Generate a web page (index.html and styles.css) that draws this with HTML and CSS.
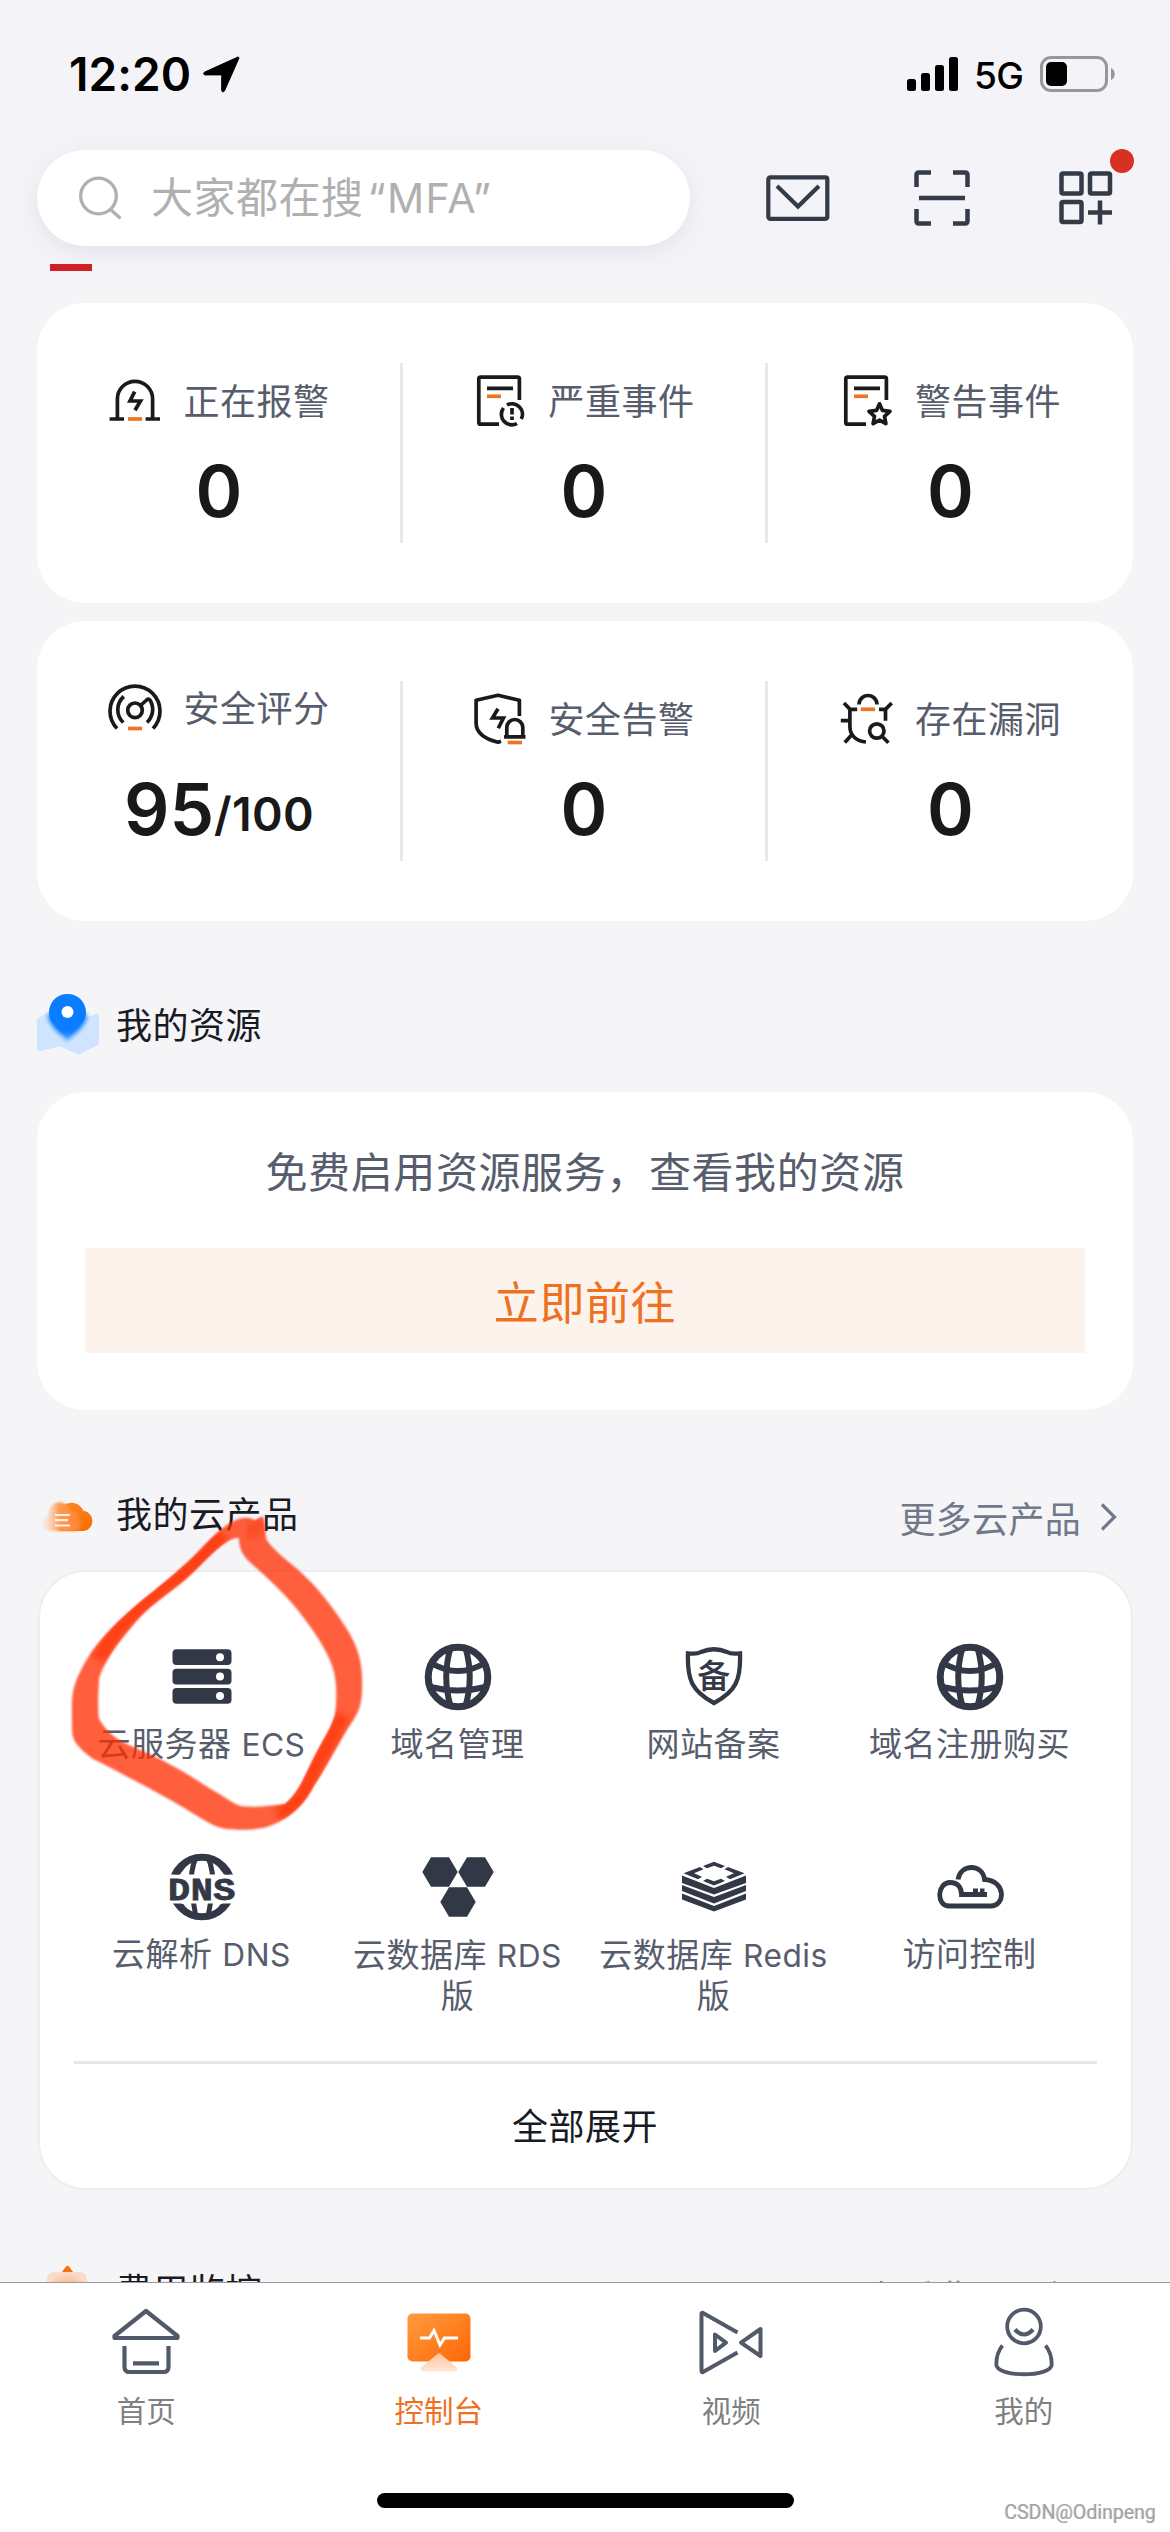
FILE: index.html
```html
<!DOCTYPE html>
<html lang="zh-CN">
<head>
<meta charset="utf-8">
<title>控制台</title>
<link rel="stylesheet" href="styles.css">
</head>
<body>
<div class="app">
  <div class="status">
    <div class="status-left">
      <span class="clock">12:20</span>
      <svg class="loc" width="37" height="37" viewBox="0 0 37 37"><path d="M34.5 1.2c1-.4 1.7.3 1.3 1.3L21.5 34.800c-.8 1.700-2.800 1.400-2.800-.500V20.300c0-1-.4-1.400-1.400-1.400H2.200c-1.900 0-2.200-2-.5-2.800z" stroke="#000"/></svg>
    </div>
    <div class="status-right">
      <svg width="52" height="35" viewBox="0 0 52 35"><rect y="22" width="9" height="12" rx="2.500"/><rect x="14" y="16" width="9" height="18" rx="2.500"/><rect x="28" y="8" width="9" height="26" rx="2.500"/><rect x="42" width="9" height="34" rx="2.500"/></svg>
      <span class="net">5G</span>
      <svg width="76" height="36" viewBox="0 0 76 36"><rect x="1.500" y="1.500" width="65" height="33" rx="9.500" fill="none" stroke="#97979a" stroke-width="3"/><rect x="6" y="6" width="21" height="24" rx="5"/><path d="M71 12c5 2 5 10 0 12z" fill="#97979a"/></svg>
    </div>
  </div>

  <header class="header">
    <div class="search">
      <svg width="44" height="44" viewBox="0 0 44 44" fill="none" stroke="#b0b0b0" stroke-width="3.300" stroke-linecap="round"><circle cx="19.500" cy="20" r="17.800"/><path d="M31.500 33.500l9 8"/></svg>
      <span class="hint">大家都在搜<span class="lat">“MFA”</span></span>
    </div>
    <div class="actions">
      <svg width="64" height="47" viewBox="0 0 64 47" fill="none" stroke="#333a48" stroke-width="4.200"><rect x="2.300" y="2.300" width="59" height="41.500" rx="2"/><path d="M11 11l21 20.500L53 11"/></svg>
      <svg width="56" height="56" viewBox="0 0 56 56" fill="none" stroke="#333a48" stroke-width="4.500"><path d="M2.500 17V5q0-2.500 2.500-2.500h12M39 2.500h12q2.500 0 2.500 2.500v12M2.500 39v12q0 2.500 2.500 2.500h12M39 53.500h12q2.500 0 2.500-2.500V39M5 28h46"/></svg>
      <div class="apps">
        <svg width="54" height="54" viewBox="0 0 54 54" fill="none" stroke="#333a48" stroke-width="4.500"><rect x="2.500" y="2.500" width="20" height="20" rx="1.500"/><rect x="31" y="2.500" width="20" height="20" rx="1.500"/><rect x="2.500" y="31" width="20" height="20" rx="1.500"/><path d="M29 41.500h24M41 29.500v24"/></svg>
        <i class="dot"></i>
      </div>
    </div>
  </header>

  <main class="content">
    <i class="mark"></i>

    <section class="card stats">
      <div class="stat">
        <div class="label"><svg width="54" height="54" viewBox="0 0 54 54" class="ln"><path d="M9.400 45V25a17.600 17.600 0 0 1 35.200 0v20M26.700 17.700L22 27h10.500l-5.500 9.300M1.600 45H16M37.600 45H52"/><path class="or" d="M20 45h14"/></svg><span>正在报警</span></div>
        <div class="num">0</div>
      </div>
      <div class="stat">
        <div class="label"><svg width="54" height="54" viewBox="0 0 54 54" class="ln"><path d="M46.400 26V5q0-1.800-1.800-1.800H7.600q-1.800 0-1.800 1.800v43.400q0 1.800 1.800 1.800H26M14 14.300h26"/><path class="or" d="M14 22.300h14"/><path d="M34 31a10.500 10.500 0 0 1 14.300 14M44 49.500a10.500 10.500 0 0 1-13.500-15.500M39 34v6.500M39 42.500v3.500"/></svg><span>严重事件</span></div>
        <div class="num">0</div>
      </div>
      <div class="stat">
        <div class="label"><svg width="54" height="54" viewBox="0 0 54 54" class="ln"><path d="M46.400 26V5q0-1.800-1.800-1.800H7.600q-1.800 0-1.800 1.800v43.400q0 1.800 1.800 1.800H26M14 14.300h26"/><path class="or" d="M14 22.300h14"/><path stroke-linejoin="round" d="M39.500 29.800l3 6.600 7.500.9-5.500 5.100 1.400 7.300-6.400-3.600-6.400 3.600 1.400-7.300-5.500-5.100 7.500-.9z"/></svg><span>警告事件</span></div>
        <div class="num">0</div>
      </div>
    </section>

    <section class="card stats">
      <div class="stat">
        <div class="label raised"><svg width="54" height="54" viewBox="0 0 54 54" class="ln"><path d="M9 47.500a25 25 0 1 1 36 0M15.800 15.500a17.500 17.500 0 0 0-.5 26M39 41.500a18 18 0 0 0 3-22.500q-1.500-2-4 .5l-5.500 5"/><circle cx="27" cy="29.300" r="7.300"/><path class="or" d="M20 47.500h14"/></svg><span>安全评分</span></div>
        <div class="num">95<small>/100</small></div>
      </div>
      <div class="stat">
        <div class="label"><svg width="54" height="54" viewBox="0 0 54 54" class="ln"><path stroke-linejoin="round" d="M46.400 24V8.300L25 3.300 3.100 8.300V31c0 10 9 16 21.900 19.300l3-1"/><path d="M25 16.700L19.500 26H30.400l-5.100 10.300M33.800 44V35.500a8 8 0 0 1 16 0V44M31 44.900h21.500"/><path class="or" d="M34.700 50.500H49"/></svg><span>安全告警</span></div>
        <div class="num">0</div>
      </div>
      <div class="stat">
        <div class="label"><svg width="54" height="54" viewBox="0 0 54 54" class="ln"><path d="M19 12.500a9 9 0 0 1 18 0M4 11l6 6.300h7.200M9.900 17.300v17.400c0 9 7 14.700 16 15.300M.8 28.700h9M4.800 50.500l7.200-8M39 17.300h6.500l6.200-6.300M45.500 17.300v11.500M43 45.300l5.400 5.400"/><circle cx="36.800" cy="39" r="7.200"/><path class="or" d="M20.800 17.300H35"/></svg><span>存在漏洞</span></div>
        <div class="num">0</div>
      </div>
    </section>

    <div class="title title-res">
      <svg width="62" height="62" viewBox="0 0 62 62">
        <defs><linearGradient id="pin" x1="0" y1="0" x2="0" y2="1"><stop offset=".6" stop-color="#0a7cff"/><stop offset="1" stop-color="#0a7cff" stop-opacity=".1"/></linearGradient><filter id="soft"><feGaussianBlur stdDeviation="2"/></filter></defs>
        <path d="M0 27q0-3 3-4l14-8 26 11 16-6q3-1 3 2v26q0 3-3 4l-15 8q-2 1-4 0l-16-7q-2-1-4 0l-16 4q-4 1-4-3z" fill="#cfe5ff"/>
        <path d="M11 20c0 12 12 18 19.500 29C38 38 50 32 50 20z" fill="url(#pin)" filter="url(#soft)"/>
        <path d="M30.500 0A18.300 18.300 0 0 0 12 18.500C12 29 22 34 30.500 46 39 34 49 29 49 18.500A18.300 18.300 0 0 0 30.500 0z" fill="url(#pin)"/>
        <circle cx="30.500" cy="18" r="6" fill="#fff"/>
      </svg>
      <h2>我的资源</h2>
    </div>

    <section class="card resource">
      <p>免费启用资源服务，查看我的资源</p>
      <button class="go">立即前往</button>
    </section>

    <div class="title title-cloud">
      <svg width="62" height="40" viewBox="0 0 62 40">
        <defs><linearGradient id="cl" x1="0" y1="0" x2="1" y2="1"><stop offset="0" stop-color="#ff8d2a"/><stop offset="1" stop-color="#f86a00"/></linearGradient><linearGradient id="cf" x1="0" y1="0" x2="1" y2="0"><stop offset="0" stop-color="#fbd9c4" stop-opacity=".2"/><stop offset=".45" stop-color="#ff9a55"/><stop offset="1" stop-color="#ff8430"/></linearGradient><filter id="sf2"><feGaussianBlur stdDeviation=".8"/></filter></defs>
        <path d="M22 37V18A13 13 0 0 1 46.500 16.800 10 10.200 0 0 1 47 37z" fill="url(#cl)"/>
        <path d="M13 37C2 37 2 23 11.500 22 11 7 28 3 33.500 17c8 1 12 12 9 17q-1.500 3-5 3z" fill="url(#cf)" filter="url(#sf2)"/>
        <path d="M18 21h15M18 26.200h13M18 31.500h15" stroke="#fff" stroke-opacity=".85" stroke-width="2.200"/>
      </svg>
      <h2>我的云产品</h2>
      <a class="more">更多云产品<svg width="17" height="28" viewBox="0 0 17 28" fill="none" stroke="#717889" stroke-width="3.200"><path d="M2 1.500l12.500 12.500L2 26.500"/></svg></a>
    </div>

    <section class="products">
      <div class="grid">
        <div class="item"><div class="ic"><svg width="60" height="56" viewBox="0 0 60 56" fill="#333847"><rect x=".5" y=".3" width="59" height="15.800" rx="4"/><rect x=".5" y="19.700" width="59" height="15.800" rx="4"/><rect x=".5" y="39" width="59" height="15.800" rx="4"/><g fill="#fff"><circle cx="48" cy="8.200" r="4"/><circle cx="48" cy="27.600" r="4"/><circle cx="48" cy="46.900" r="4"/></g></svg></div><span>云服务器 <span class="lat">ECS</span></span></div>
        <div class="item"><div class="ic"><svg width="68" height="68" viewBox="0 0 68 68" class="globe"><use href="#globe-lines"/></svg></div><span>域名管理</span></div>
        <div class="item"><div class="ic"><svg width="58" height="60" viewBox="0 0 58 60"><path d="M3 6.300q9 1 13-1.300 13-5.500 26 0 4 2.300 13 1.300C56 33 51 44 29 56 7 44 2 33 3 6.300z" fill="none" stroke="#333847" stroke-width="4.300"/><text x="29" y="41" class="bei">备</text></svg></div><span>网站备案</span></div>
        <div class="item"><div class="ic"><svg width="68" height="68" viewBox="0 0 68 68" class="globe"><g id="globe-lines"><circle cx="34" cy="34" r="29.800" stroke-width="7"/><path d="M26.500 5q-8.500 29 0 58M41.500 5q8.500 29 0 58M8 20.500q26 15 52 0M6.500 44q27.500 7 55 0" stroke-width="6"/></g></svg></div><span>域名注册购买</span></div>
        <div class="item"><div class="ic"><svg width="70" height="68" viewBox="0 0 70 68" class="globe"><defs><clipPath id="caps"><path d="M0 0h70v21.500H0zM0 50.500h70V68H0z"/></clipPath></defs><g clip-path="url(#caps)"><circle cx="35" cy="34" r="29.800" stroke-width="7"/><path d="M29 4q-6 15-4.500 30t4.500 30M41 4q6 15 4.500 30T41 64M29 4q-14 6-21 22M41 4q14 6 21 22M29 64q-10-4-15-12M41 64q10-4 15-12" stroke-width="5"/></g><text x="35" y="46.500" textLength="68" lengthAdjust="spacingAndGlyphs" class="dns">DNS</text></svg></div><span>云解析 <span class="lat">DNS</span></span></div>
        <div class="item"><div class="ic"><svg width="72" height="60" viewBox="0 0 72 60" fill="#333847"><path d="M.3 15L9 .3h18L35.700 15 27 29.700H9zM36.300 15L45 .3h18L71.700 15 63 29.700H45zM18.300 45L27 30.300h18L53.700 45 45 59.700H27z"/></svg></div><span class="two">云数据库 <span class="lat">RDS</span><br>版</span></div>
        <div class="item"><div class="ic"><svg width="64" height="52" viewBox="0 0 64 52" fill="#333847"><path d="M0 14.500L32 27l32-12.500v7.500L32 33.500 0 22zM0 24l32 12 32-12v6L32 42.500 0 30zM0 32.500L32 45l32-12.500V38.500L32 50.500 0 38.500z"/><path d="M21 5L32 .8 43 5l-4 2.300-7-2.600-7 2.600zM18 6l3.500 2.300L12 12.300l8 3.500-4 2.500L1.500 12.300zM46 6l-3.500 2.300 9.500 4-8 3.500 4 2.500 14.500-6zM21 20l4-2.300 7 2.600 7-2.600 4 2.300-11 4.500z"/></svg></div><span class="two">云数据库 <span class="lat">Redis</span><br>版</span></div>
        <div class="item"><div class="ic"><svg width="68" height="46" viewBox="-1 -1 68 46" fill="none" stroke="#333847" stroke-width="4.800"><path d="M21 14.500C23-1.500 46-1.500 47.500 14.500 69 15.500 69 41 53.500 41H12C-1 41 0 17.500 13 17.500c8 0 11.500 5 11.500 12H50"/><path d="M36 23.500h5V28h-5zM43 23.500h4.500V28H43z" fill="#333847" stroke="none"/></svg></div><span>访问控制</span></div>
      </div>
      <div class="expand">全部展开</div>
    </section>

    <div class="title title-cost">
      <svg width="62" height="62" viewBox="0 0 62 62"><defs><radialGradient id="fee" cx=".5" cy=".6" r=".6"><stop offset="0" stop-color="#ff8a3d"/><stop offset="1" stop-color="#fbdccb"/></radialGradient></defs><path d="M29 6.500q1.500-1.500 3 0L42 20H19z" fill="#f47216"/><rect x="10" y="12" width="40" height="46" rx="7" fill="url(#fee)"/></svg>
      <h2>费用监控</h2>
      <a class="more">查看费用明细<svg width="17" height="28" viewBox="0 0 17 28" fill="none" stroke="#717889" stroke-width="3.200"><path d="M2 1.500l12.500 12.500L2 26.500"/></svg></a>
    </div>
  </main>

  <nav class="tabs">
    <div class="tab"><svg width="68" height="70" viewBox="0 0 68 70" fill="none" stroke="#525a69" stroke-width="4.200" stroke-linejoin="round"><path d="M34 4L2.500 29v2h63v-2zM12.500 39v21q0 5 5 5h34q5 0 5-5V39M21 56.300h26"/></svg><span>首页</span></div>
    <div class="tab on"><svg width="64" height="70" viewBox="0 0 64 70"><defs><linearGradient id="con" x1="0" y1="0" x2="1" y2="1"><stop offset="0" stop-color="#ff9c3e"/><stop offset="1" stop-color="#ff6605"/></linearGradient><linearGradient id="tri" x1="0" y1="0" x2="0" y2="1"><stop offset="0" stop-color="#ffc49a"/><stop offset="1" stop-color="#ffe6d8"/></linearGradient></defs><rect x=".5" y="6.500" width="63" height="48" rx="5" fill="url(#con)"/><path d="M13 31h9.500l4.500-7.500 6 14.500 4.500-7H51" fill="none" stroke="#fff" stroke-width="3"/><path d="M30.500 47q1.500-1.500 3 0L50 60.500q1.500 4-2 4H16q-3.500 0-2-4z" fill="url(#tri)"/></svg><span>控制台</span></div>
    <div class="tab"><svg width="64" height="70" viewBox="0 0 64 70" fill="none" stroke="#525a69" stroke-width="4" stroke-linejoin="round"><path d="M38.500 25.500L4 6q-1.500-.5-1.500 1v57q0 1.500 1.500 1l34.500-19.500M16 27.500V44l11-8.300zM61.500 22v27L42 35.700z"/></svg><span>视频</span></div>
    <div class="tab"><svg width="60" height="70" viewBox="0 0 60 70" fill="none" stroke="#525a69" stroke-width="3.800"><circle cx="30" cy="19.500" r="16.800"/><path d="M21 22.500q9 10 18 0" stroke-width="4.200"/><path d="M8.500 38.500C3 45 2.300 53 2.300 57.500c0 13 55.400 13 55.400 0 0-4.500-.7-12.500-6.200-19"/></svg><span>我的</span></div>
    <i class="home-bar"></i>
    <span class="sign">CSDN@Odinpeng</span>
  </nav>

  <svg class="scribble" viewBox="180 130 800 960" preserveAspectRatio="none">
    <defs><filter id="brush" x="-10%" y="-10%" width="120%" height="120%"><feGaussianBlur stdDeviation="2.500"/></filter><filter id="glow" x="-20%" y="-20%" width="140%" height="140%"><feGaussianBlur stdDeviation="9"/></filter>
    <clipPath id="ring"><path id="ringp" clip-rule="evenodd" d="M703 140C712 155 710 195 714 210C735 245 770 272 800 302C850 352 890 410 930 480C960 535 970 580 970 640C970 710 960 730 935 770C900 835 870 900 840 950C820 995 790 1030 755 1052C720 1076 690 1080 650 1080C590 1082 575 1070 530 1040C460 990 350 925 250 868C215 840 195 815 194 790C193 730 190 680 200 648C215 600 240 550 270 512C310 460 350 420 400 375C450 330 470 310 500 280C550 230 580 180 625 155C645 143 665 140 682 152zM638 205C615 206 600 222 580 240C540 280 520 310 480 345C435 385 400 410 365 455C325 510 285 560 266 625C264 670 262 700 265 745C285 790 320 815 350 828C440 870 500 910 560 955C600 980 625 1003 648 1010C690 1014 730 1008 763 1003C800 970 815 920 840 865C860 820 890 770 897 735C902 690 902 650 895 610C885 560 850 500 820 455C780 390 735 345 690 298C660 270 640 250 640 205z"/></clipPath></defs>
    <use href="#ringp" fill="#ff2a05" fill-opacity=".76" fill-rule="evenodd" filter="url(#brush)"/>
    <g clip-path="url(#ring)" opacity=".85"><path d="M600 195C560 230 530 280 480 320C400 385 330 450 290 520L265 570" fill="none" stroke="#ff3a10" stroke-width="40" filter="url(#glow)"/><path d="M915 735C890 800 850 880 820 950C800 1000 775 1015 745 1035" fill="none" stroke="#ff3a10" stroke-width="40" filter="url(#glow)"/><path d="M700 150L665 200" fill="none" stroke="#ff3a10" stroke-width="36" stroke-opacity=".6" filter="url(#glow)"/></g>
  </svg>
</div>
</body>
</html>
```
FILE: styles.css
```css
* { box-sizing: border-box; margin: 0; padding: 0; }
html, body { width: 1170px; height: 2532px; overflow: hidden; }
body {
  background: #f5f5f8;
  color: #181b24;
  font-family: Inter, "Noto Sans CJK SC", sans-serif;
}
svg { display: block; flex: none; }
.lat { font-size: .96em; }
.app { position: relative; display: flex; flex-direction: column; width: 1170px; height: 2532px; }

/* Status bar */
.status { display: flex; justify-content: space-between; align-items: center; height: 150px; padding: 0 54px 2px 69px; background: #f4f4f8; }
.status-left, .status-right { display: flex; align-items: center; color: #000; }
.clock { font-size: 46px; font-weight: 600; letter-spacing: .1px; }
.loc { margin-left: 12px; }
.net { margin: 2px 17px 0 15px; font-size: 37px; font-weight: 500; letter-spacing: -.8px; }

/* Header */
.header { display: flex; align-items: flex-start; height: 114px; padding-left: 37px; background: #f4f4f8; }
.search { display: flex; align-items: center; gap: 28px; width: 653px; height: 96px; padding-left: 42px; border-radius: 48px; background: #fff; box-shadow: 0 6px 22px rgba(50, 40, 90, .09); }
.hint { color: #b0b0b0; font-size: 42px; letter-spacing: .5px; line-height: 60px; }
.hint .lat { margin-left: 4px; font-size: .98em; letter-spacing: 1.3px; }
.actions { display: flex; align-items: center; height: 96px; margin-left: 76px; }
.actions > svg + svg { margin-left: 84px; }
.apps { position: relative; margin-left: 89px; }
.dot { position: absolute; left: 51px; top: -22px; width: 24px; height: 24px; border-radius: 50%; background: #d93025; }

/* Scrolling content */
.content { flex: none; height: 2018px; overflow: hidden; padding: 0 37px; }
.mark { display: block; width: 42px; height: 7px; margin: 0 0 32px 13px; background: #d01f26; }
.card { background: #fff; border-radius: 48px; }

.stats { display: grid; grid-template-columns: repeat(3, 1fr); height: 300px; padding: 60px 0 60px 1px; margin-bottom: 18px; }
.stat { display: flex; flex-direction: column; align-items: center; gap: 23px; padding-top: 11px; border-right: 3px solid #e8e8ea; }
.stat:last-child { border-right: 0; }
.label { display: flex; align-items: center; gap: 21px; height: 54px; color: #575d6c; font-size: 36px; letter-spacing: .5px; }
.label span { padding-bottom: 4px; }
.raised { position: relative; top: -11px; }
.ln { fill: none; stroke: #1a1a1a; stroke-width: 3.7; }
.or { stroke: #ed7524; }
.num { height: 80px; line-height: 80px; color: #191919; font-size: 71px; font-weight: 600; }
.num small { font-size: 46.5px; line-height: 1; letter-spacing: .3px; vertical-align: 4px; }

.title { display: flex; align-items: center; height: 62px; }
.title h2 { margin-left: 17px; padding-bottom: 4px; font-size: 36px; font-weight: 400; letter-spacing: .5px; }
.title-res { margin-top: 73px; }

.resource { height: 318px; margin-top: 36px; padding: 51px 48px 0; text-align: center; }
.resource p { height: 60px; line-height: 60px; color: #575d6c; font-size: 42px; letter-spacing: .6px; }
.go { display: block; width: 1000px; height: 105px; margin-top: 45px; border: 0; background: #fcf3ed; color: #ee7020; font: 45px Inter, "Noto Sans CJK SC", sans-serif; letter-spacing: .6px; }

.title-cloud { margin-top: 73px; }
.more { display: flex; align-items: center; gap: 19px; margin: 5px 16px 0 auto; color: #717889; font-size: 36px; letter-spacing: .3px; }

.products { width: 1095px; height: 620px; margin: 25px 0 0 .5px; padding: 0 34px; border: 2px solid #eeeef1; border-radius: 48px; background: #fff; }
.grid { display: grid; grid-template-columns: repeat(4, 256px); grid-template-rows: 210px 210px; padding-top: 71px; height: 489px; }
.item { display: flex; flex-direction: column; align-items: center; color: #575d6c; font-size: 33px; line-height: 40px; letter-spacing: .5px; text-align: center; }
.item > span { margin-top: 13px; white-space: nowrap; }
.item > .two { margin-top: 14px; }
.ic { display: flex; align-items: center; justify-content: center; height: 68px; }
.globe { fill: none; stroke: #333847; }
.bei { font: 500 33px "Noto Sans CJK SC", sans-serif; fill: #333847; text-anchor: middle; }
.dns { font: 700 32px "Liberation Mono", monospace; fill: #333847; stroke: #333847; stroke-width: .8px; text-anchor: middle; }
.expand { height: 130px; border-top: 3px solid #e4e6ec; line-height: 127px; text-align: center; font-size: 36px; letter-spacing: .5px; }

.title-cost { margin-top: 70px; }
.title-cost .more { margin-top: 10px; }

/* Bottom tabs */
.tabs { position: relative; display: grid; grid-template-columns: repeat(4, 1fr); height: 250px; padding-top: 24px; border-top: 1px solid #9a9a9c; background: #fff; }
.tab { display: flex; flex-direction: column; align-items: center; color: #808080; font-size: 29.5px; line-height: 40px; }
.tab span { margin-top: 14px; }
.on { color: #ee7020; }
.home-bar { position: absolute; left: 377px; top: 210px; width: 417px; height: 15px; border-radius: 8px; background: #000; }
.sign { position: absolute; right: 14px; bottom: 7px; color: #a2a2a2; font: 19.5px/24px Roboto, sans-serif; text-shadow: -1px 0 #ddd; }

.scribble { position: absolute; left: 67px; top: 1513px; width: 299px; height: 320px; }
```
